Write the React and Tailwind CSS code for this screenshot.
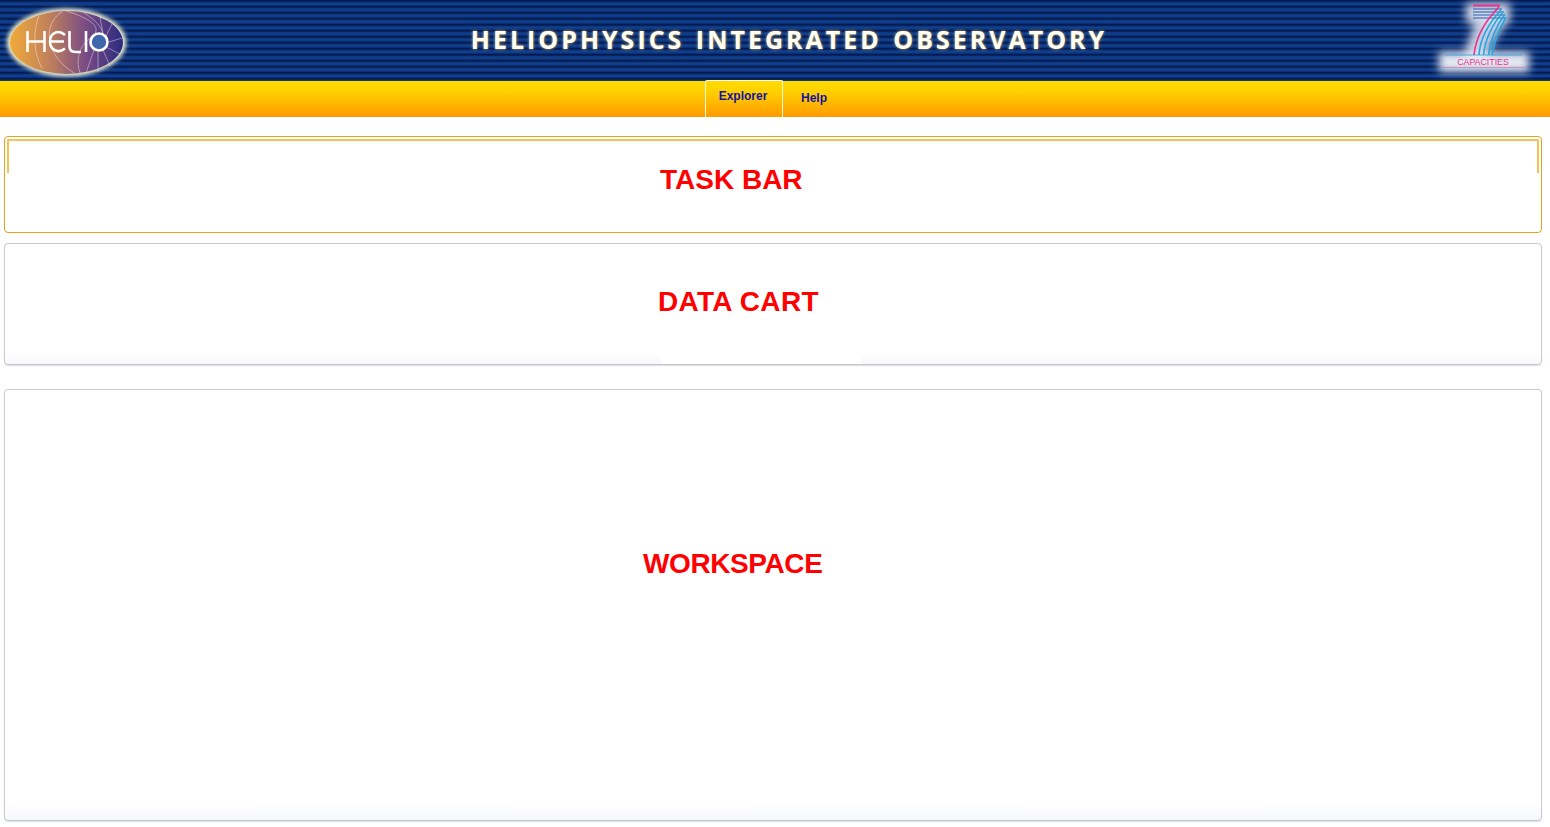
const stripes = "bg-[repeating-linear-gradient(180deg,#061c50_0px,#061c50_1px,#0b2d70_2px,#11408f_3px,#11408f_4px,#0d3580_5px,#0a2a68_6px)]";

function HelioLogo() {
  return (
    <svg width="130" height="80" viewBox="0 0 130 80" className="absolute left-0 top-0">
      <defs>
        <linearGradient id="hg" x1="0" x2="1" y1="0" y2="0">
          <stop offset="0" stopColor="#f2aa38" />
          <stop offset="0.35" stopColor="#c0805c" />
          <stop offset="0.68" stopColor="#774a85" />
          <stop offset="1" stopColor="#2b2a80" />
        </linearGradient>
        <filter id="hb" x="-20%" y="-20%" width="140%" height="140%">
          <feGaussianBlur stdDeviation="2.2" />
        </filter>
      </defs>
      <ellipse cx="66.5" cy="42.5" rx="59.5" ry="34" fill="#f6f6d2" filter="url(#hb)" />
      <ellipse cx="66.5" cy="42.5" rx="56.5" ry="31.5" fill="url(#hg)" />
      <g fill="none" stroke="#ffffff" strokeOpacity="0.5" strokeWidth="0.8">
        <path d="M39 16C33 30 33 52 42 68" />
        <path d="M62 12C46 20 40 52 74 73" />
        <path d="M66 11C96 20 104 30 88 40C78 48 76 62 80 73" />
        <path d="M84 13C96 20 102 28 103 34" />
        <path d="M100 17L103 34" />
        <path d="M112 24L106 36" />
        <path d="M122 38L109 42" />
        <path d="M120 54L106 47" />
        <path d="M110 66L103 50" />
        <path d="M98 72L98 52" />
        <path d="M86 73L94 50" />
      </g>
      <circle cx="99" cy="42" r="8.5" fill="#3f67ae" stroke="#ffffff" strokeWidth="2.6" />
      <g fill="none" stroke="#ffffff" strokeWidth="2.6">
        <path d="M27.5 31V52M44.5 31V52M27.5 41.5H44.5" />
        <path d="M65 35C58 29 50 33 50 41.5C50 50 58 54 65 48.5M51 41.5H64" />
        <path d="M69.5 31V46.5C69.5 50.5 71.5 52 76 52H81" />
        <path d="M86 31V52" />
      </g>
    </svg>
  );
}

function SevenLogo() {
  return (
    <svg width="130" height="80" viewBox="0 0 130 80" className="absolute right-0 top-0">
      <defs>
        <filter id="sb" x="-30%" y="-30%" width="160%" height="160%">
          <feGaussianBlur stdDeviation="4.5" />
        </filter>
      </defs>
      <g filter="url(#sb)" fill="#e4e8f2">
        <rect x="46" y="3" width="44" height="20" opacity="0.9" />
        <path d="M56 20H88L64 58H42Z" opacity="0.85" />
        <rect x="19" y="52" width="90" height="20" />
      </g>
      <path d="M53 5.5H80" stroke="#e8308c" strokeWidth="2" />
      <g stroke="#2a5fb0" strokeWidth="1.2">
        <path d="M53 9H82M53 12H84M53 15H85M53 18H86" />
      </g>
      <g fill="none" strokeWidth="1.6">
        <path d="M79 7C66 20 56 36 54 55" stroke="#e8308c" />
        <path d="M81 10C69 23 60 38 59 55" stroke="#25a6e0" />
        <path d="M83 12C72 25 65 40 63.5 55" stroke="#25a6e0" />
        <path d="M85 14C76 26 70 42 68.5 55" stroke="#25a6e0" />
        <path d="M86 17C80 28 74 42 72 55" stroke="#25a6e0" />
      </g>
      <path d="M25 55H102" stroke="#25a6e0" strokeWidth="0.8" />
      <path d="M23 67.5H104" stroke="#e8308c" strokeOpacity="0.5" strokeWidth="0.7" />
      <text x="63" y="65" textAnchor="middle" fill="#e8308c" fontFamily="Liberation Sans" fontSize="8.8">CAPACITIES</text>
    </svg>
  );
}

function Panel({ className, children }) {
  return (
    <div className={`relative flex items-center rounded-[4px] border ${className}`}>
      {children}
    </div>
  );
}

function Title({ className, children }) {
  return (
    <span className={`font-['Liberation_Sans',Arial,sans-serif] text-[28px] leading-none font-bold text-[#ff0000] ${className}`}>
      {children}
    </span>
  );
}

export default function App() {
  return (
    <div className="flex h-[827px] w-[1550px] flex-col overflow-hidden bg-white font-['Liberation_Sans',Arial,sans-serif]">
      <header className={`relative flex h-[81px] shrink-0 items-center justify-center ${stripes}`}>
        <HelioLogo />
        <h1 className="ml-[28px] -mt-[2px] font-['Open_Sans',sans-serif] text-[25px] font-bold tracking-[3px] [word-spacing:2px] whitespace-nowrap text-[#fffef2] [text-shadow:0_0_3px_#d9b45a]">
          HELIOPHYSICS INTEGRATED OBSERVATORY
        </h1>
        <SevenLogo />
      </header>
      <nav className="flex h-[36px] shrink-0 justify-center bg-[linear-gradient(180deg,#ffdc00_0%,#ffd000_30%,#ff9a00_100%)]">
        <div className="relative z-10 -mt-px flex h-[37px] w-[78px] justify-center rounded-t-[2px] border-x border-t border-[#fffbe0] pt-[6px] pr-[2px] text-[12px] font-bold text-[#1414a0]">
          Explorer
        </div>
        <div className="flex w-[62px] justify-center pt-[8px] text-[12px] font-bold text-[#1414a0]">Help</div>
      </nav>
      <main className="flex grow flex-col pl-[4px] pr-[8px] pt-[19px] pb-[5px]">
        <Panel className="h-[97px] border-[#e2a41c] bg-white pl-[655px]">
          <div className="absolute top-[2px] left-[2px] right-[2px] h-[34px] rounded-t-[2px] border-x-2 border-t-2 border-[#f3c25c]" />
          <Title className="relative -mt-[10px]">TASK BAR</Title>
        </Panel>
        <Panel className="mt-[10px] h-[122px] border-[#c8c9d0] bg-[linear-gradient(180deg,#ffffff_90%,#f7f8fc_100%)] pl-[653px] shadow-[0_1px_1px_#dcdde2]">
          <div className="absolute right-[680px] bottom-0 h-[10px] w-[200px] bg-white" />
          <Title className="relative -mt-[4px] tracking-[0.3px]">DATA CART</Title>
        </Panel>
        <Panel className="mt-[24px] h-[432px] border-[#c8c9d0] bg-[linear-gradient(180deg,#ffffff_96%,#f7f8fc_100%)] pl-[638px] shadow-[0_1px_1px_#dcdde2]">
          <Title className="-mt-[82px] tracking-[-0.4px]">WORKSPACE</Title>
        </Panel>
      </main>
    </div>
  );
}
